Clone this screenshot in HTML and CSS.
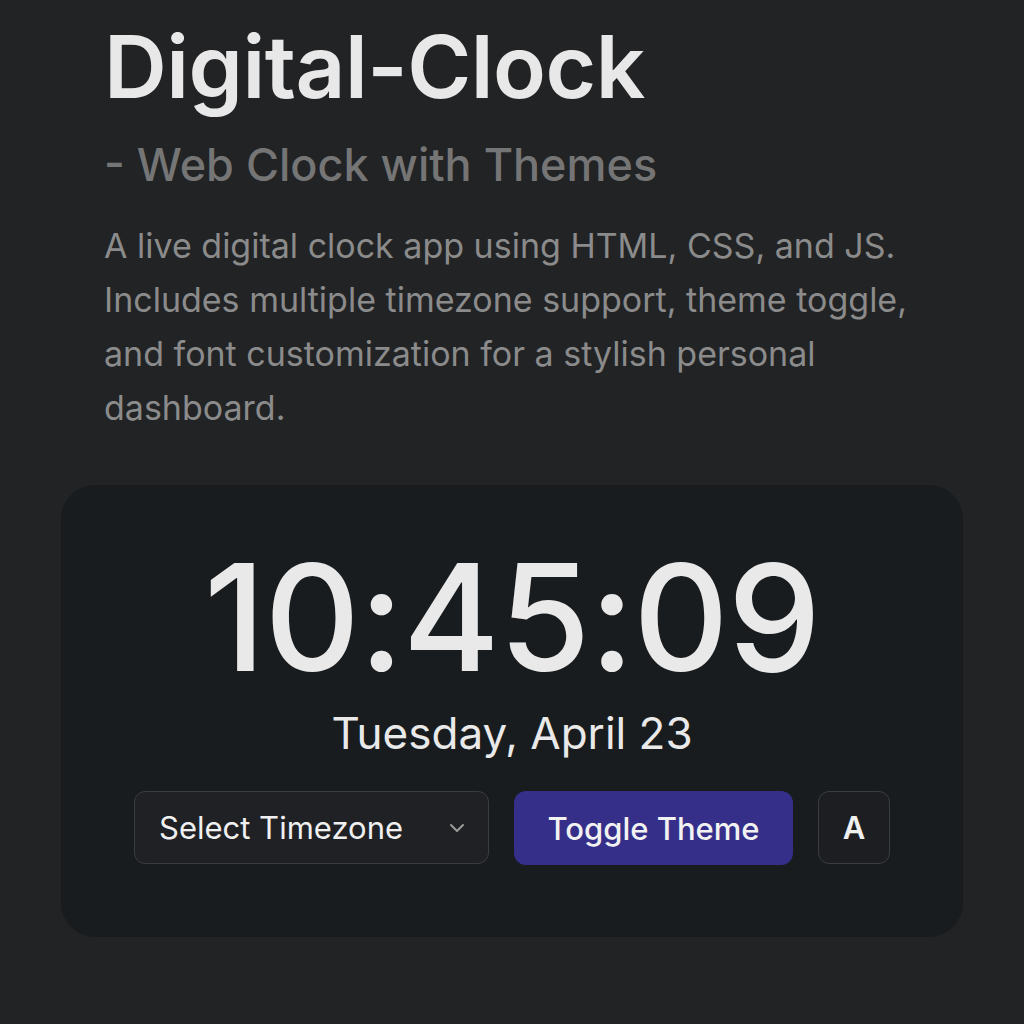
FILE: index.html
```html
<!DOCTYPE html>
<html lang="en">
<head>
<meta charset="utf-8">
<title>Digital-Clock</title>
<link rel="stylesheet" href="styles.css">
</head>
<body>
<main class="page">
  <header class="intro">
    <h1 class="title">Digital-Clock</h1>
    <h2 class="subtitle">- Web Clock with Themes</h2>
    <p class="desc">A live digital clock app using HTML, CSS, and JS. Includes multiple timezone support, theme toggle, and font customization for a stylish personal dashboard.</p>
  </header>
  <section class="card">
    <div class="time">10:45:09</div>
    <div class="date">Tuesday, April 23</div>
    <div class="controls">
      <div class="select">
        <span>Select Timezone</span>
        <svg class="chev" width="18" height="12" viewBox="0 0 18 12"><path d="M3 3l6 6 6-6" fill="none" stroke="#9a9a9a" stroke-width="2" stroke-linecap="round" stroke-linejoin="round"/></svg>
      </div>
      <button class="toggle">Toggle Theme</button>
      <button class="font">A</button>
    </div>
  </section>
</main>
</body>
</html>
```
FILE: styles.css
```css
* { box-sizing: border-box; }
html, body { margin: 0; padding: 0; }
body {
  background: #222325;
  font-family: Inter, "Noto Sans", sans-serif;
  color: #e6e6e6;
  width: 1024px;
  height: 1024px;
  overflow: hidden;
}
.page {
  padding: 0 61px;
}
.intro {
  padding: 0 0 0 43px;
}
.title {
  margin: 0;
  padding-top: 17px;
  font-size: 87px;
  font-weight: 600;
  line-height: 100px;
  letter-spacing: -0.5px;
  color: #e8e8e8;
}
.subtitle {
  margin: 0;
  margin-top: 18px;
  font-size: 45px;
  font-weight: 500;
  line-height: 60px;
  color: #757575;
}
.desc {
  margin: 24px 0 0;
  font-size: 34px;
  font-weight: 400;
  line-height: 54px;
  color: #8b8b8b;
  max-width: 830px;
}
.card {
  margin-top: 50px;
  width: 902px;
  height: 452px;
  background: #191c1e;
  border-radius: 34px;
  display: flex;
  flex-direction: column;
  align-items: center;
  padding-top: 53px;
}
.time {
  font-size: 148px;
  font-weight: 500;
  line-height: 160px;
  color: #e9e9e9;
  letter-spacing: -1px;
}
.date {
  margin-top: 7px;
  font-size: 44px;
  line-height: 56px;
  color: #e9e9e9;
}
.controls {
  margin-top: 30px;
  display: flex;
  gap: 25px;
}
.select {
  width: 355px;
  height: 73px;
  border: 1.5px solid #3a3c40;
  border-radius: 11px;
  background: #1f2124;
  display: flex;
  align-items: center;
  justify-content: space-between;
  padding: 0 22px 0 24px;
  font-size: 31px;
  color: #f0f0f0;
}
button {
  font-family: inherit;
  cursor: pointer;
}
.toggle {
  width: 279px;
  height: 74px;
  border: none;
  border-radius: 12px;
  background: #352f8a;
  color: #f2f2f2;
  font-size: 31px;
  font-weight: 500;
}
.font {
  width: 72px;
  height: 73px;
  border: 1.5px solid #3a3c40;
  border-radius: 11px;
  background: #1c1e21;
  color: #f0f0f0;
  font-size: 31px;
  font-weight: 600;
}
```
